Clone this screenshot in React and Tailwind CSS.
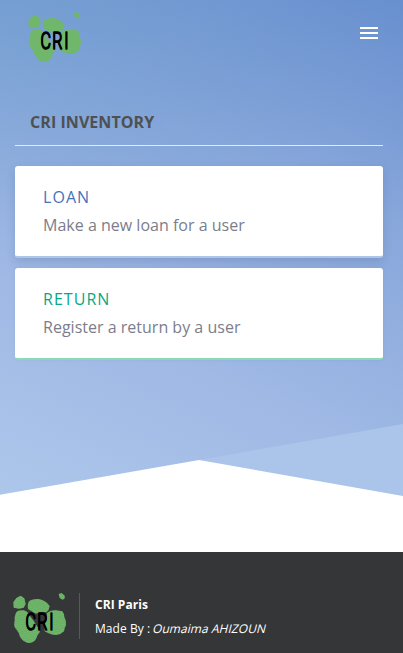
import React from "react";

function Logo({ textured = false }) {
  return (
    <svg width="56" height="54" viewBox="36 30 168 162" className="block shrink-0">
      <defs>
        <pattern id="grain" width="8" height="7" patternUnits="userSpaceOnUse" patternTransform="rotate(-12)">
          <path d="M0 2 Q2 0 4 2 T8 2" fill="none" stroke="#559856" strokeWidth="1.3" />
        </pattern>
        <g id={textured ? "blobs-b" : "blobs-a"}>
          <path d="M40 64 L49 51 L62 44 L73 52 L77 69 L71 80 L57 83 L41 80 Z" strokeLinejoin="round" />
          <path d="M86 62 Q94 53 116 54 Q138 58 149 75 Q148 87 139 94 L124 93 L108 98 Q96 92 84 84 Q81 72 86 62 Z" />
          <path d="M48 95 Q54 87 70 88 Q85 91 90 105 Q101 118 112 137 Q121 144 119 154 Q111 162 108 174 Q100 187 84 186 Q68 181 60 167 Q57 155 49 145 Q41 138 43 126 Q45 119 44 108 Z" />
          <path d="M140 97 Q151 87 168 88 L187 91 Q193 98 193 108 Q199 119 198 132 Q194 139 192 151 Q184 160 169 162 Q151 162 134 151 L133 129 Q144 119 140 97 Z" />
          <path d="M176 39 L185 36 L194 44 L194 52 L188 56 L179 51 Z" />
        </g>
      </defs>
      <use href={textured ? "#blobs-b" : "#blobs-a"} fill="#70b76b" />
      {textured && <use href="#blobs-b" fill="url(#grain)" />}
      <g
        transform="translate(0 148) scale(.68 1)"
        className="font-['Roboto',sans-serif] font-light"
        fontSize="71"
        fill="#000"
        stroke="#000"
        strokeWidth="5"
        strokeLinejoin="round"
      >
        <text x="113">C</text>
        <text x="164">R</text>
        <text x="217">I</text>
      </g>
    </svg>
  );
}

function ActionCard({ title, text, titleClass, cardClass }) {
  return (
    <a className={`block h-[92px] rounded-[3px] border-b-2 bg-white px-7 pt-[17px] ${cardClass}`}>
      <h6 className={`text-base leading-7 tracking-[1.05px] ${titleClass}`}>{title}</h6>
      <p className="text-base leading-7 tracking-[0.01px] text-[#7c7d8b]">{text}</p>
    </a>
  );
}

export default function App() {
  return (
    <div className="h-[653px] w-full overflow-hidden bg-white font-['Open_Sans',sans-serif]">
      <div className="relative h-[552px] overflow-hidden">
        <main className="h-[500px] bg-[radial-gradient(ellipse_400px_240px_at_0_0,rgba(98,152,200,0.42),rgba(98,152,200,0)),linear-gradient(25deg,#adc7eb_0%,#a0b9e5_32%,#88a7db_67%,#688fcf_100%)]">
          <header className="flex h-[72px] justify-between pl-[27px] pr-[25px] pt-[10px]">
            <Logo />
            <button className="mt-[17px] flex h-3 w-[18px] flex-col justify-between">
              <span className="h-0.5 w-full bg-white" />
              <span className="h-0.5 w-full bg-white" />
              <span className="h-0.5 w-full bg-white" />
            </button>
          </header>
          <section className="ml-[15px] mr-5 pt-[38px]">
            <h1 className="h-9 border-b border-[#e4e9f4] pl-[15px] text-base font-bold leading-6 tracking-[0.06px] text-[#4e5052]">
              CRI INVENTORY
            </h1>
            <div className="flex flex-col gap-[10px] pt-5">
              <ActionCard
                title="LOAN"
                text="Make a new loan for a user"
                titleClass="text-[#4873b9]"
                cardClass="border-[#adc5e8] shadow-[0_4px_8px_rgba(70,90,130,0.22)]"
              />
              <ActionCard
                title="RETURN"
                text="Register a return by a user"
                titleClass="text-[#08a788]"
                cardClass="border-[#8bd9b7] shadow-[0_0_3px_rgba(70,90,130,0.1)]"
              />
            </div>
          </section>
        </main>
        <svg className="absolute left-0 top-[423px]" width="403" height="129" viewBox="0 0 403 129">
          <path d="M199 37 L403 1 V80 Z" fill="#abc4e9" />
          <path d="M0 71.8 L199 37 L403 73 V129 H0 Z" fill="#fff" />
        </svg>
      </div>
      <footer className="flex h-[101px] bg-[#353638] pl-3 pt-[39px] text-xs leading-6 text-white">
        <Logo textured />
        <div className="ml-[11px] mt-[2px] h-[46px] border-l border-[#58595b] pl-[15px]">
          <p className="font-bold tracking-[0.05px]">CRI Paris</p>
          <p className="tracking-[0.06px]">
            Made By : <em className="inline-block -skew-x-[14deg] not-italic">Oumaima AHIZOUN</em>
          </p>
        </div>
      </footer>
    </div>
  );
}
